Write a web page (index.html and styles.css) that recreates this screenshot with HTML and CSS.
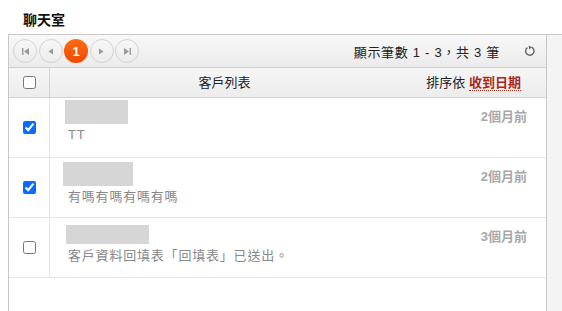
FILE: index.html
```html
<!DOCTYPE html>
<html lang="zh-Hant">
<head>
    <meta charset="UTF-8">
    <title>聊天室</title>
    <link rel="stylesheet" href="styles.css">
</head>

<body>

<h3 class="title">聊天室</h3>

<div class="frame">
    <!-- List pane -->
    <div class="list-pane">
        <div class="toolbar">
            <div class="pager">
                <span class="pg-btn">
                    <svg width="9" height="9" viewBox="0 0 9 9"><rect x="1" y="1" width="1.4" height="7" fill="#999"/><path d="M8 1 L3 4.5 L8 8 Z" fill="#999"/></svg>
                </span>
                <span class="pg-btn">
                    <svg width="9" height="9" viewBox="0 0 9 9"><path d="M7 1.5 L2.5 4.5 L7 7.5 Z" fill="#999"/></svg>
                </span>
                <span class="pg-btn current">1</span>
                <span class="pg-btn">
                    <svg width="9" height="9" viewBox="0 0 9 9"><path d="M2 1.5 L6.5 4.5 L2 7.5 Z" fill="#999"/></svg>
                </span>
                <span class="pg-btn">
                    <svg width="9" height="9" viewBox="0 0 9 9"><path d="M1 1 L6 4.5 L1 8 Z" fill="#999"/><rect x="6.6" y="1" width="1.4" height="7" fill="#999"/></svg>
                </span>
            </div>
            <span class="count">顯示筆數 1 - 3，共 3 筆</span>
            <span class="refresh">
                <svg width="12" height="12" viewBox="0 0 12 12"><path d="M7.6 2.2 A4.2 4.2 0 1 1 3.4 2.6" fill="none" stroke="#666" stroke-width="1.4"/><path d="M4.6 0.6 L7.9 2.3 L5.2 4.6 Z" fill="#666"/></svg>
            </span>
        </div>

        <div class="head-row">
            <div class="check-cell"><input type="checkbox"></div>
            <div class="head-title">客戶列表</div>
            <div class="sort">排序依 <span class="sort-key">收到日期</span></div>
        </div>

        <!-- Rows -->
        <div class="row">
            <div class="check-cell"><input type="checkbox" checked></div>
            <div class="info">
                <div class="blur blur-a"></div>
                <div class="msg">TT</div>
            </div>
            <div class="when">2個月前</div>
        </div>
        <div class="row">
            <div class="check-cell"><input type="checkbox" checked></div>
            <div class="info">
                <div class="blur blur-b"></div>
                <div class="msg">有嗎有嗎有嗎有嗎</div>
            </div>
            <div class="when">2個月前</div>
        </div>
        <div class="row">
            <div class="check-cell"><input type="checkbox"></div>
            <div class="info">
                <div class="blur blur-c"></div>
                <div class="msg">客戶資料回填表「回填表」已送出。</div>
            </div>
            <div class="when">3個月前</div>
        </div>
    </div>

    <!-- Detail pane -->
    <div class="detail-pane"></div>
</div>

</body>
</html>
```

FILE: styles.css
```css
body {
    font-family: "Liberation Sans", "Noto Sans CJK TC", sans-serif;
    background: #fff;
    color: #333;
    margin: 0;
    padding: 0;
}
.title {
    font-size: 14px;
    line-height: 20px;
    font-weight: bold;
    color: #111;
    margin: 10px 0 4px 23px;
}
.frame {
    display: flex;
    margin-left: 8px;
    min-height: 277px;
    border-top: 1px solid #c8c8c8;
    border-left: 1px solid #c8c8c8;
}
.list-pane {
    width: 538px;
    box-sizing: border-box;
    border-right: 1px solid #c8c8c8;
    background: #fff;
}
.detail-pane {
    flex: 1;
    background: #f4f4f4;
}
.toolbar {
    display: flex;
    align-items: center;
    height: 32px;
    padding: 0 10px 0 4px;
    background: linear-gradient(#f8f8f8, #ebebeb);
    border-bottom: 1px solid #cfcfcf;
}
.pager {
    display: flex;
    gap: 1.5px;
}
.pg-btn {
    display: flex;
    align-items: center;
    justify-content: center;
    width: 24px;
    height: 24px;
    box-sizing: border-box;
    border: 1px solid #d2d2d2;
    border-radius: 50%;
    background: linear-gradient(#f7f7f7, #ececec);
}
.pg-btn.current {
    border: none;
    background: linear-gradient(#ff6a10, #f04a00);
    color: #fff;
    font-weight: bold;
    font-size: 13px;
}
.count {
    margin-left: auto;
    font-size: 13px;
    color: #222;
    letter-spacing: 0.7px;
}
.refresh {
    display: flex;
    margin-left: 24px;
}
.head-row {
    display: flex;
    height: 29px;
    background: linear-gradient(#f6f6f6, #ececec);
    border-bottom: 1px solid #d4d4d4;
    font-size: 13px;
}
.check-cell {
    display: flex;
    align-items: center;
    justify-content: center;
    width: 40px;
    flex: none;
    border-right: 1px solid #e6e6e6;
}
.head-row .check-cell {
    border-right-color: #d4d4d4;
}
.check-cell input {
    margin: 0;
    width: 13px;
    height: 13px;
    accent-color: #0b6bff;
}
.head-title {
    flex: 1;
    text-align: center;
    line-height: 29px;
    color: #222;
}
.sort {
    width: 122px;
    line-height: 29px;
    color: #222;
    padding-right: 25px;
    text-align: right;
}
.sort-key {
    color: #a8281a;
    font-weight: bold;
    border-bottom: 1px dotted #a8281a;
    line-height: 15px;
    display: inline-block;
}
.row {
    display: flex;
    height: 59px;
    border-bottom: 1px solid #e6e6e6;
}
.info {
    flex: 1;
}
.blur {
    background: #d6d6d6;
    height: 24px;
}
.blur-a {
    width: 63px;
    margin: 2px 0 0 15px;
}
.blur-b {
    width: 70px;
    margin: 4px 0 0 13px;
}
.blur-c {
    width: 83px;
    height: 19px;
    margin: 7px 0 0 16px;
}
.msg {
    font-size: 13px;
    line-height: 18px;
    color: #888;
    margin: 2px 0 0 18px;
    letter-spacing: 0.8px;
}
.blur-c + .msg {
    margin-top: 3px;
}
.when {
    font-size: 13px;
    line-height: 18px;
    font-weight: bold;
    color: #a8a8a8;
    padding: 10px 19px 0 0;
}
```
